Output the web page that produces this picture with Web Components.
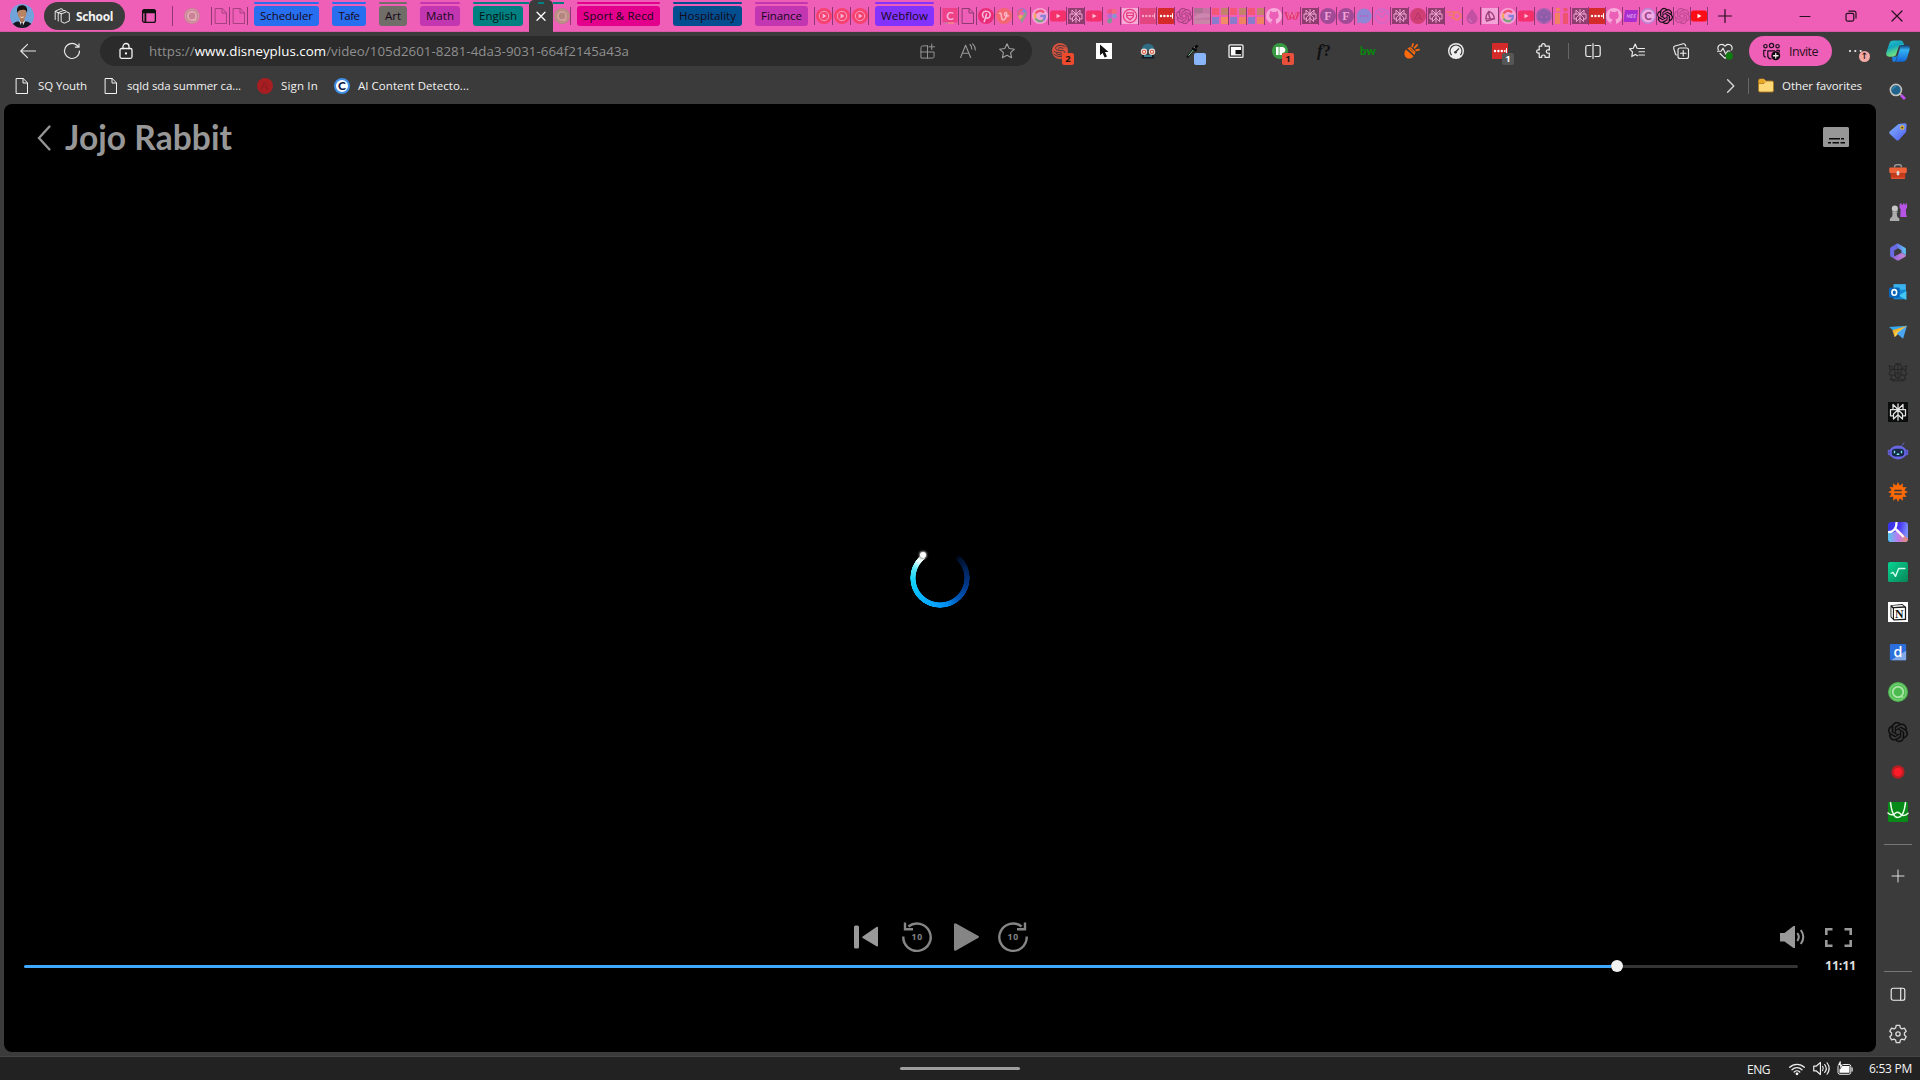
<!DOCTYPE html>
<html lang="en">
<head>
<meta charset="utf-8">
<title>Jojo Rabbit</title>
<style>
html,body{margin:0;padding:0;width:1920px;height:1080px;overflow:hidden;background:#3b3b3b}
body{font-family:"Open Sans","Noto Sans",sans-serif;font-size:11.5px;color:#f2f2f2}
</style>
</head>
<body>
<browser-window></browser-window>
<script>
const line=(d,c='#f0f0f0',w=1)=>`<g fill="none" stroke="${c}" stroke-width="${w}" stroke-linecap="round" stroke-linejoin="round">${d}</g>`;
const P=(d,x='')=>`<path d="${d}" ${x}/>`;
const spin=(d,n)=>Array.from({length:n},(_,i)=>`<g transform="rotate(${i*360/n} 8 8)">${d}</g>`).join('');
const letter=(t,c,s=11,x=8,y=12,f='Open Sans',w=700,extra='')=>`<text x="${x}" y="${y}" text-anchor="middle" font-family="${f}" font-weight="${w}" font-size="${s}" fill="${c}" ${extra}>${t}</text>`;
const knot=c=>`<path transform="scale(.6667)" fill="${c}" stroke="${c}" stroke-width=".25" d="M22.2819 9.8211a5.9847 5.9847 0 0 0-.5157-4.9108 6.0462 6.0462 0 0 0-6.5098-2.9A6.0651 6.0651 0 0 0 4.9807 4.1818a5.9847 5.9847 0 0 0-3.9977 2.9 6.0462 6.0462 0 0 0 .7427 7.0966 5.98 5.98 0 0 0 .511 4.9107 6.051 6.051 0 0 0 6.5146 2.9001A5.9847 5.9847 0 0 0 13.2599 24a6.0557 6.0557 0 0 0 5.7718-4.2058 5.9894 5.9894 0 0 0 3.9977-2.9001 6.0557 6.0557 0 0 0-.7475-7.0729zm-9.022 12.6081a4.4755 4.4755 0 0 1-2.8764-1.0408l.1419-.0804 4.7783-2.7582a.7948.7948 0 0 0 .3927-.6813v-6.7369l2.02 1.1686a.071.071 0 0 1 .038.052v5.5826a4.504 4.504 0 0 1-4.4945 4.4944zm-9.6607-4.1254a4.4708 4.4708 0 0 1-.5346-3.0137l.142.0852 4.783 2.7582a.7712.7712 0 0 0 .7806 0l5.8428-3.3685v2.3324a.0804.0804 0 0 1-.0332.0615L9.74 19.9502a4.4992 4.4992 0 0 1-6.1408-1.6464zM2.3408 7.8956a4.485 4.485 0 0 1 2.3655-1.9728V11.6a.7664.7664 0 0 0 .3879.6765l5.8144 3.3543-2.0201 1.1685a.0757.0757 0 0 1-.071 0l-4.8303-2.7865A4.504 4.504 0 0 1 2.3408 7.872zm16.5963 3.8558L13.1038 8.364 15.1192 7.2a.0757.0757 0 0 1 .071 0l4.8303 2.7913a4.4944 4.4944 0 0 1-.6765 8.1042v-5.6772a.79.79 0 0 0-.407-.667zm2.0107-3.0231l-.142-.0852-4.7735-2.7818a.7759.7759 0 0 0-.7854 0L9.409 9.2297V6.8974a.0662.0662 0 0 1 .0284-.0615l4.8303-2.7866a4.4992 4.4992 0 0 1 6.6802 4.66zM8.3065 12.863l-2.02-1.1638a.0804.0804 0 0 1-.038-.0567V6.0742a4.4992 4.4992 0 0 1 7.3757-3.4537l-.142.0805L8.704 5.459a.7948.7948 0 0 0-.3927.6813zm1.0976-2.3654l2.602-1.4998 2.6069 1.4998v2.9994l-2.5974 1.4997-2.6067-1.4997Z"/>`;
const docIcon=c=>line(P('M2.5.5h6.7l4.3 4.3v10.700h-11zM9 .7V5h4.300'),c,1);
const perp=(bg,c)=>`<rect width="16" height="16" rx=".5" fill="${bg}"/>`+line(P('M8 1.500v13M8 6 4 2v4M8 6l4-4v4M8 6.200 4.400 9.600v4L8 10.200M8 6.200l3.600 3.400v4L8 10.200M4.400 11H2V6h12v5h-2.400'),c,1);
const targ=(a,b)=>`<circle cx="8" cy="8" r="8" fill="${a}"/><circle cx="8" cy="8" r="4.200" fill="none" stroke="${b}" stroke-width="1.500"/><circle cx="8" cy="8" r="6.500" fill="none" stroke="${b}" stroke-width=".5"/>`+P('M8.500 11.200h3.700v1.200H8z',`fill="${b}"`);
const yt=(a,b)=>`<rect y="2.500" width="16" height="11" rx="2.500" fill="${a}"/>`+P('M6.500 5.700v4.600l4-2.300z',`fill="${b}"`);
const dots=(a,b)=>`<rect width="16" height="16" rx=".8" fill="${a}"/><g fill="${b}"><circle cx="3" cy="8" r="1.200"/><circle cx="6.400" cy="8" r="1.200"/><circle cx="9.800" cy="8" r="1.200"/><circle cx="12.800" cy="8" r="1"/><rect x="14" y="5.200" width="1" height="5.500"/></g>`;
const gee=`<g fill="none" stroke-width="2.300"><circle cx="8" cy="8" r="8" fill="#f6a6d8" stroke="none"/><path d="M12 4.500A5.200 5.200 0 0 0 3.500 5.500" stroke="#f25272"/><path d="M3.500 5.500a5.200 5.200 0 0 0 0 5" stroke="#f4a65c"/><path d="M3.500 10.500a5.200 5.200 0 0 0 7.800 1.600" stroke="#7aa37c"/><path d="M11.300 12.100A5.200 5.200 0 0 0 13 8H8.300" stroke="#8a80d8"/></g>`;
const tiles=(a,b,c,d)=>`<path d="M0 0h7v7H0z" fill="${a}"/><path d="M9 0h7v7H9z" fill="${b}"/><path d="M0 9h7v7H0z" fill="${c}"/><path d="M9 9h7v7H9z" fill="${d}"/>`;
const git=`<circle cx="8" cy="8" r="8" fill="#f7a9d9"/>`+P('M6 16v-2.600c-2 .5-2.600-1-3.200-1.500M10 16v-3c0-.8-.3-1.300-.6-1.600 4-.6 3.900-5 2.500-6.200.2-.7.2-1.400-.1-2.100-.8 0-1.600.5-2.200 1a7 7 0 0 0-3.200 0c-.7-.5-1.400-1-2.200-1-.3.7-.3 1.400-.1 2.100-1.400 1.200-1.500 5.600 2.500 6.200-.4.3-.6.900-.6 1.600v3z','fill="#ec5fb6"');
const play3=`<circle cx="8" cy="8" r="8" fill="#f5426f"/><circle cx="8" cy="8" r="4.700" fill="none" stroke="#f9a6cc" stroke-width=".9"/>`+P('M6.600 5.600v4.800L10.500 8z','fill="#f9b0d2"');
const serifF=`<circle cx="8" cy="8" r="8" fill="#a14a98"/>`+letter('F','#f2a3d8',12,8,12.200,'Liberation Serif',700);
const fullStar='M8 .8l2.200 4.700 5.200.7-3.800 3.500 1 5.100L8 12.300l-4.600 2.500 1-5.100L.6 6.200l5.200-.7z';
const skip10=(flip)=>`<g fill="none" stroke="#858585" stroke-width="2.400" ${flip?'transform="matrix(-1 0 0 1 30 0)"':''}><path d="M1.300 14.500A13.700 13.700 0 1 0 6.400 4.500"/><path d="M3 .5v6.700h8" /></g>`+letter('10','#858585',8.600,15.200,18.100,'Open Sans',700,'letter-spacing=".9"');

const ICONS={
avatar:`<defs><clipPath id="c"><circle cx="8" cy="8" r="8"/></clipPath></defs><g clip-path="url(#c)"><path fill="#6fa3da" d="M0 0h16v16H0z"/><path fill="#15171f" d="M1 16c.5-4 3-4.500 7-4.500S14.500 12 15.300 16z"/><path fill="#e8ecf2" d="M6 11l2 4.800L10.200 11z"/><path fill="#23242e" d="M7.500 12.300h1L9 16H7z"/><path fill="#a9765a" d="M6.600 9h3v2.500L8 12.500l-1.400-1z"/><ellipse cx="8" cy="6.300" rx="2.900" ry="3.900" fill="#b98263"/><path fill="#17110f" d="M4.800 6C4.200 2.700 5.500.9 8 .9s4 1.500 3.300 5.100C10.900 4.300 10.300 3.700 9 3.800 7 4 5.500 3.800 4.800 6z"/><path d="M6.900 8.600q1.100.8 2.200 0" stroke="#f3ddd0" stroke-width=".6" fill="none"/></g>`,
school:line(P('M7.500 5.800 12.500 3.800l2.800 1.200v8L10.300 15.200 7.500 13.800zM4.200 13V4.700L10 2.300l1.800.7M1.200 11.500V3.200L7 .7l1.800.7M7.500 5.800l-3-1M4.200 4.700l-2.800-1.200'),'#f2f2f2',.95),
tabact:`<rect x="1.600" y="1.600" width="12.800" height="12.800" rx="2" fill="none" stroke="#111" stroke-width="1.300"/><path d="M1 5.200V3.500a2 2 0 0 1 2-2h10a2 2 0 0 1 2 2v1.700zM3.500 5h1.800v9.500H3.500z" fill="#111"/>`,
target:targ('#c98396','#e8b0b8'), target2:targ('#b2877f','#d8a4a2'), targetG:targ('#4cba4f','#a7e3a2'),
doc:docIcon('#f2f2f2'), docP:docIcon('#a4417e'), docD:docIcon('#8d3a70'),
close:line(P('M4 4.300l8 8M12 4.300l-8 8'),'#fff',1.300),
wclose:line(P('M3 3l10 10M13 3L3 13'),'#251020',1.200), wmin:line(P('M3 8.500h10'),'#251020',1.200),
wmax:line('<rect x="3" y="5.300" width="7.800" height="7.800" rx="1.500"/>'+P('M5.800 3.100H11a2 2 0 0 1 2 2v5'),'#251020',1.200),
newtab:line(P('M8 1.500v13M1.500 8h13'),'#251020',1.200),
play3, cee:`<path fill="#ee4187" d="M.5 0h15v14.500H.5z"/><path d="M2 15h4" stroke="#b986a5"/><path d="M6 15h6" stroke="#f2a36d"/>`+letter('C','#f9b3d8',11.500,8,12,'Lato',700),
pin:`<circle cx="8" cy="8" r="8" fill="#e92d78"/>`+P('M5.300 9.200C3.200 6.200 5 3.300 8.200 3.300c3 0 4.400 2 3.900 4.300-.5 2.500-3 3.300-4.200 1.900M8.500 6L6.300 13.500','fill="none" stroke="#f8b7d9" stroke-width="1.600" stroke-linecap="round"'),
vk:`<circle cx="8" cy="8" r="8" fill="#f56673"/>`+line(P('M3.300 5.300c1.500-.8 1.900.5 2 2.500.1 2.200 1 4.700 2.300 4.200 1.700-.7 3.300-4 3.200-6.200-.1-2-2.300-1.800-2.300.1 0 2 2 2.700 4 1.900'),'#fbb6c6',1.500),
maps:P('M8 .3C4.500.3 3 3 3 5.300 3 9 7 11 8 15.700 9 11 13 9 13 5.300 13 3 11.500.3 8 .3z','fill="#8b79cc"')+P('M3.700 8.300L9.900.8C5 .2 2 3.600 3.700 8.300z','fill="#f06083"')+P('M5 10.200l6.500-7.500c2.600 3-.2 6-3.500 12-.5-2-1.500-3-3-4.500z','fill="#96a084"')+P('M4 8.800l2.500-3 2.800 2-3.400 4z','fill="#f1a064"')+P('M10 1l2.500 2L9.700 6 8 4z','fill="#8b85d6"')+`<circle cx="8" cy="5.500" r="1.900" fill="#ee62b7"/>`,
gee, yt:yt('#f42f6c','#fbc0d8'), ytS:yt('#fb0d16','#fff'),
perp:perp('#8f3c70','#eda4d2'), perpB:perp('#0b0c0c','#e2e2e2'),
figma:`<path d="M8 1H5.500a2.400 2.400 0 0 0 0 4.800H8z" fill="#f15286"/><path d="M8 1h2.500a2.400 2.400 0 0 1 0 4.800H8z" fill="#f46a7c"/><path d="M8 5.800H5.500a2.400 2.400 0 0 0 0 4.800H8z" fill="#b866d1"/><circle cx="10.500" cy="8.200" r="2.400" fill="#8b93d3"/><path d="M8 10.600H5.500A2.400 2.400 0 1 0 8 13z" fill="#799a93"/>`,
shield:`<path fill="#f7a9d8" d="M0 0h16v16H0z"/><circle cx="8" cy="8" r="6.600" fill="none" stroke="#e83a7a" stroke-width="1.200"/>`+line(P('M4.700 4.800h6.600v4L8 11.800 4.700 8.800zM5 7.500h6'),'#e83a7a',1.200),
dots:dots('#e2457f','#f6a7cc'), dotsS:dots('#d42b2a','#fff'), knotF:knot('#a4427f'), knotP:knot('#bb4991'), knotB:knot('#0d0d0d'),
blur:`<path fill="#c476a5" d="M0 0h16v16H0z"/><path fill="#ad7294" d="M0 0h9v5H0z"/><path fill="#cd87ae" d="M3 7l6-2 7 1v3l-8 1-8 1V9z"/><path fill="#c985a8" d="M0 12h16v4H0z"/>`,
tiles1:tiles('#f45678','#c5826a','#8b7bcd','#f38c66'), tiles2:tiles('#f45678','#c5826a','#8b7bcd','#f08361'),
git, dubya:P('M0 4h4l1.500 5L7 4h2l1.500 5L12 4h4l-3.500 8H9.500L8 9l-1.500 3h-3z','fill="#e23a76"')+P('M3.200 4.500l2 7M12.800 4.500l-2 7M6 4l2 5 2-5','stroke="#f48db8" stroke-width=".7" fill="none"'),
serifF, chat:P('M8 .5a7.500 7.500 0 1 1-3.700 14L.8 15.300l.9-3.600A7.500 7.500 0 0 1 8 .5z','fill="#8f86d5"')+`<g fill="#b45fc0"><circle cx="4.700" cy="8" r="1"/><circle cx="8" cy="8" r="1"/><circle cx="11.300" cy="8" r="1"/></g>`,
ring:line('<circle cx="8" cy="8" r="7.200"/>'+P('M1.500 4.500C5 5 6 7.500 8 9.500c2-2 3-4.500 6.500-5M5.500 2.500l2.500 2 2.500-2'),'#c56dcb',1.300),
redc:`<circle cx="8" cy="8" r="8" fill="#cf3f73"/>`+line(P('M4.500 11.500L8 4.500l3.500 7M7 11.500c0-3 4-2 4.500 0'),'#b43467',1),
comet:line(P('M.8 4h8M3 7h5M5.500 10H8'),'#f3776c',1.600)+`<circle cx="11" cy="8" r="3.700" fill="none" stroke="#f3776c" stroke-width="2"/>`,
drop:P('M8 .3C9 3.500 13.500 6.500 13.500 10.500a5.500 5.500 0 0 1-11 0C2.500 6.500 7 3.500 8 .3z','fill="#c251a3"')+P('M5 10.500a3 3 0 0 0 3 3','fill="none" stroke="#d978bb"'),
sail:`<path fill="#f4a3d8" d="M0 0h16v16H0z"/>`+line(P('M7 3.300c3 1 5 4 5.500 7.500L4.500 13c-1.500-4 0-7 2.500-9.700zM3.500 10.700l9 .1M7 3.300c-.5 3 0 5.500 1.500 7.500'),'#9e3f78',1.300),
hex:`<circle cx="8" cy="8" r="8" fill="#a761ae"/>`+line(P('M8 2l5.200 3v6L8 14l-5.200-3V5zM2.800 5L8 8l5.200-3M8 8v6M5.400 3.500l5.200 9M10.600 3.500l-5.200 9M2.800 11L8 2l5.200 9z'),'#7f5aa8',.9),
ii:`<g fill="#f28065"><path d="M2 0h4v3.500H2zM1 5h5v11H1z"/></g><path fill="#ed526e" d="M9.500 0h4v3.500h-4zM9 5h5v11H9z"/>`,
nhs:P('M2 2h13l-1.500 12H.5z','fill="#a92ed0"')+P('M4 9.500l.5-3 1.500 3 .5-3M10 6.500H8l-.5 3h2M7.800 8h1.700M13 6.500h-1.800l-.4 3h1.800M11 8h1.500','fill="none" stroke="#d99af0" stroke-width=".8"'),
ceeR:`<circle cx="8" cy="8" r="7.200" fill="#f4a9e0" stroke="#b987d8" stroke-width="1.400"/>`+letter('C','#99458f',11.500,8,12,'Lato',900),
back:line(P('M15.500 8H.8M7.500 1.300L.8 8l6.700 6.700'),'#e8e8e8',1.100),
refresh:line(P('M15.500 8A7.500 7.500 0 1 1 12.900 2.300l1.800 1.600M15 .8v3.400h-3.600'),'#e8e8e8',1.200),
lock:line('<rect x="2" y="5.500" width="12" height="9.800" rx="1.500"/>'+P('M5 5.500V3.500a3 3 0 0 1 6 0v2'),'#f4f4f4',1.300)+'<circle cx="8" cy="10.400" r="1.100" fill="#fff"/>',
apps:line(P('M8 2H3a2 2 0 0 0-2 2v11h12.500a1.500 1.500 0 0 0 1.500-1.500V8.500H1M8 2v13M12.500 0v6M9.500 3h6'),'#9a9a9a',1),
read:line(P('M.6 14.500L5.600 2.300l5 12.200M2.400 10.300h6.500M10 1.500c1.300 1.300 1.800 2.700 1.800 4.500M12.700.8C14.600 2.700 15.300 4.700 15.300 7'),'#9a9a9a',1.100),
star:line(P(fullStar),'#a2a2a2',1.100),
sred:`<circle cx="8" cy="8" r="8" fill="#d9513e"/>`+line(P('M13.300 3.800C11 2 5.500 1.800 4 4c-1.300 2.300 1 3.300 4 3.400 3.500.2 5.300.8 4.800 2.600-.7 2.400-5 2.500-8.300.8M11 5.300c-2-.8-4-.8-4.500-.2M2 8.500c2 1.500 5 .8 7.500 1.500M2 11c2.500 3 7 3 9 2.300'),'#3b3b3b',1),
cursor:`<path fill="#fff" d="M0 0h16v16H0z"/><path d="M4 1.500v10.700l2.600-2.300 2 4.600 2.400-1-2-4.500h3.600z" fill="#111"/>`,
face:`<path d="M1.500 7C1.700 3 4.500.7 8 .7S14.300 3 14.500 7z" fill="#2f6d85"/><path d="M2.500 12h11l1 3.500h-13z" fill="#161d22"/><path d="M4 12h8v2H4z" fill="#3d7f95"/><circle cx="4" cy="8.800" r="2.700" fill="#e25947" stroke="#e9dcd5" stroke-width="1.100"/><circle cx="12" cy="8.800" r="2.700" fill="#e25947" stroke="#e9dcd5" stroke-width="1.100"/><circle cx="4" cy="8.800" r="1" fill="#fff"/><circle cx="12" cy="8.800" r="1" fill="#fff"/>`,
dropper:`<path d="M3 14.500L9.500 6.500" stroke="#111" stroke-width="2.200"/><path d="M4.500 12.700L9.300 7" stroke="#7fd69d" stroke-width="1"/><path d="M8.500 4.500l4 3.500M10.500 6l3-3.800" stroke="#090909" stroke-width="2.600"/><path d="M10 4.300l.9 1" stroke="#ddd"/>`,
pip:'<rect x="1" y="1.800" width="14" height="12.600" rx="1" fill="none" stroke="#eee" stroke-width="1.300"/><path d="M3 4h10v8.400H3z" fill="#fff"/><path d="M7.500 7h5.500v4.200H7.500z" fill="#111"/>',
pushb:`<circle cx="8" cy="8" r="8" fill="#389b42"/><path d="M4 4h2.600v8H4zM7.500 4H10c4.500 0 4.500 6 0 6v2H7.500z" fill="#fff"/>`,
fq:letter('<tspan font-style="italic">f</tspan>?','#111',17,8,12.800,'Liberation Serif',700),
bw:letter('bw','#08870d',11.500,8,12,'Lato',900),
spray:`<path d="M2 6.500l7.500 6.700c-2 3-5.800 3-7.700 1C-.3 12 .3 8.500 2 6.500zM3.300 5.200L6.500 4l5 5-1 3z" fill="#ff6b0b"/>`+line(P('M8.200 3.500L9 .8M10.500 4.800l2.700-2.900M12 7.300l3-.6'),'#ff6b0b',1.700)+line(P('M2.800 6.200l6.800 6M6.500 6l2.500 2.500'),'#3b3b3b',.8),
gauge:`<circle cx="8" cy="8" r="8" fill="#eee"/><path d="M3.700 12.200a6 6 0 1 1 8.600 0" fill="none" stroke="#3a3a3a" stroke-width="1.200"/><path d="M7.500 9L11 5.500" stroke="#333" stroke-width="1.300"/><circle cx="7.500" cy="9.300" r="1.300" fill="#333"/>`,
puzzle:line(P('M5.800 3.200C5.200 1.500 6.200.7 7.400.7s2.300.9 1.600 2.500h4.300v3.900c-1.600-.7-3 .2-3 1.400s1.400 2.200 3 1.500v4.300H9c.5-1.500-.3-2.300-1.600-2.300s-2.100.8-1.600 2.300H3.200v-4.500C1.500 10.500.7 9.600.7 8.400s1-2 2.500-1.400V3.200z'),'#ececec',1.200),
split:line(P('M6 2.500H2.500a1.700 1.700 0 0 0-1.700 1.700v7.600a1.700 1.700 0 0 0 1.700 1.700H6M10 2.500h3.500a1.700 1.700 0 0 1 1.700 1.700v7.600a1.700 1.700 0 0 1-1.700 1.700H10M8 .5v15'),'#eee',1.200),
favs:line(P('M10 5.500L8 5.300 6.200 1 4.300 5.300l-3.800.6 3 3-.7 4.700 3.500-2.200 2.400 1.300M10.500 5.500h5M10 8.700h5.500M10 12h5.500'),'#eee',1.150),
coll:line('<rect x="5" y="5" width="10.500" height="10.500" rx="2"/>'+P('M10.200 7.500v5.500M7.500 10.200H13M12.700 3l-.4-1A1.700 1.700 0 0 0 10.200.8L2 3A1.900 1.900 0 0 0 .7 5.300L2.500 11c.2.600.5.900 1 1'),'#eee',1.150),
heart:line(P('M1.300 7C-.5 2 5.500-.5 8 3.200 10.500-.5 16.500 2 14.700 7M3 10.500l5 4.800 2-2M.5 8.200H4l2-3 2.800 6L10.500 8H13'),'#eee',1.150)+'<circle cx="12.300" cy="13" r="3.700" fill="#107c10"/>',
people:line('<circle cx="2.300" cy="3" r="1.600"/><circle cx="8" cy="2.300" r="2"/><circle cx="13.700" cy="3" r="1.600"/>'+P('M4.500 13V7.500h6.500M2.300 7H.7v4c0 1 .5 2 1.500 2.300M4.500 11c0 2.200 1 3.800 3 4M13 7h2.300v1.500'),'#211020',1.150)+'<circle cx="12" cy="12" r="4.200" fill="#0d080b"/>'+line(P('M12 9.800v4.400M9.800 12h4.400'),'#f4e8f0',1.200),
more:'<g fill="#eee"><circle cx="2" cy="8" r="1.100"/><circle cx="7.300" cy="8" r="1.100"/><circle cx="12.700" cy="8" r="1.100"/></g>',
copilot:`<defs><linearGradient id="a" x2=".4" y2="1"><stop stop-color="#2ac4c9"/><stop offset=".45" stop-color="#12a4bf"/><stop offset=".75" stop-color="#51d292"/><stop offset="1" stop-color="#78df77"/></linearGradient><linearGradient id="b" x2="0" y2="1"><stop stop-color="#12396e"/><stop offset=".3" stop-color="#34b2f5"/><stop offset="1" stop-color="#1266d8"/></linearGradient></defs><path d="M14 5h6.500c3 0 3.800 2.500 3 5l-2.500 8c-.7 2.500-2 3.700-4.500 3.700H7.500c2.500 0 3-1.500 3.700-4L14 8z" fill="url(#b)"/><path d="M7.500.5h7.200c2 0 2.600 1.600 3.300 4.500h-2.500c-2 0-2.700 1.200-3.300 3.200L10.300 14c-.6 1.800-1.500 2.700-3.500 2.700H3.300C.5 16.700-.3 14.500.5 12L3.300 3.500C4 1.500 5.200.5 7.500.5z" fill="url(#a)"/><path d="M6 16.700h3c1.500 0 2.200-1 3-3l-2 6c-.5 1.500-1.500 2-2.500 2-1.500 0-1-3-1.500-5z" fill="#1c82e2"/>`,
signin:'<circle cx="8" cy="8" r="8" fill="#a61e22"/>'+line(P('M4 11.500l3.500-7 4 7M4.500 9c2-1.500 4-1 5.500 2.500'),'#8e1b1f',1),
ai:`<circle cx="8" cy="8" r="7" fill="#fff" stroke="#3f8fe6" stroke-width="2"/>`+letter('C','#0e1749',12,8,12.300,'Lato',900),
chev:line(P('M5 2.500L10.500 8 5 13.500'),'#d8d8d8',1.200),
folder:'<path d="M.5 2.500A1.500 1.500 0 0 1 2 1h4l2 2h6A1.500 1.500 0 0 1 15.500 4.500v8A1.500 1.500 0 0 1 14 14H2A1.500 1.500 0 0 1 .5 12.500z" fill="#ffd977" stroke="#a9751d" stroke-width=".9"/><path d="M1 2.500A1 1 0 0 1 2 1.500h3.800l1.500 2L5.500 5.200H1z" fill="#e9a924"/><path d="M1 5.500h5L7.500 3.800" stroke="#a9751d" stroke-width=".8" fill="none"/>',
search:`<path d="M10.500 10.500l1.200 1.200" stroke="#bbb" stroke-width="1.500"/><path d="M11.500 11.500L15 15" stroke="#c04cf0" stroke-width="2.700"/><circle cx="6.500" cy="6.500" r="5.200" fill="#20638d" stroke="#c4c0bb" stroke-width="1.500"/><path d="M3.500 6a3 3 0 0 1 3-2.500" stroke="#3a91b7" fill="none"/>`,
tag:`<defs><linearGradient id="a" x2="1" y2="1"><stop stop-color="#82b5ff"/><stop offset="1" stop-color="#4f5bf0"/></linearGradient></defs><path d="M8.500.8l5.500-.5c1.200 0 1.700.7 1.700 1.700l-.5 6-6.500 7c-.8.7-1.600.6-2.300 0L.8 9.700C0 9 0 8 .8 7.300z" fill="url(#a)"/><circle cx="11.800" cy="4" r="1.500" fill="#444" stroke="#f0bd31" stroke-width="1"/>`,
box:`<path d="M5 4V3a1.500 1.500 0 0 1 1.500-1.500h3A1.500 1.500 0 0 1 11 3v1" fill="none" stroke="#999" stroke-width="1.300"/><rect x=".2" y="4" width="15.600" height="5" rx="1" fill="#f06237"/><path d="M1.500 9h13v4a1 1 0 0 1-1 1h-11a1 1 0 0 1-1-1z" fill="#c53b1c"/><path d="M2 13h12v1H2z" fill="#e65a36"/><rect x="6.800" y="7" width="2.400" height="4" rx="1" fill="#ddd"/>`,
games:`<path d="M9.500.5h1.700v1.300h1V.5h1.700v1.300h.8V.5H16v4l-1 1 .3 5 .7 2h-6l.3-7-1-1z" fill="#b655e5"/><circle cx="5.200" cy="5" r="2.700" fill="#c7c7c7"/><path d="M2.700 7.500h5v1.200H6.800l.5 3.300 1.900 2V16H.8v-2l2-2 .5-3.300h-.6z" fill="#acacac"/>`,
m365:`<defs><linearGradient id="a"><stop stop-color="#6d68e8"/><stop offset="1" stop-color="#5cc8f2"/></linearGradient><linearGradient id="b"><stop stop-color="#8a58d8"/><stop offset="1" stop-color="#c98bd6"/></linearGradient></defs><path d="M7.500.3L14 4c.8.500 1 .8 1 1.700v5L11 8.500v-2L7.300 4.300C5.500 3 5.600 1.300 7.500.3z" fill="url(#a)"/><path d="M7.500.3L2 3.600c-.8.500-1 .9-1 1.700v5.400c0 2 2 2.500 3.600 1.500V6.700L8 4.700C5.800 3.500 5.600 1.400 7.500.3z" fill="#6a6be4"/><path d="M1 10.700c.3 1.800 2 2.400 3.600 1.400L11 8.600l4 2.200c0 .8-.3 1.200-1 1.600l-5 2.900c-.8.500-1.300.500-2 0l-5-2.900c-.6-.4-1-.8-1-1.700z" fill="url(#b)"/>`,
outlook:`<path fill="#38b3ed" d="M4 1h11v11H4z"/><path fill="#138ad5" d="M4 6l11 0v8.500H4z"/><path fill="#45c7f5" d="M15.500 7v8l-7-4z"/><rect y="4" width="9.500" height="9" rx="1" fill="#0764b8"/><ellipse cx="4.700" cy="8.400" rx="2.100" ry="2.500" fill="none" stroke="#fff" stroke-width="1.400"/>`,
plane:`<path fill="#37a9ed" d="M0 3.500L16 2.500 5 7.500z"/><path fill="#f1b12c" d="M3 6.500l13-4L5 12.500z"/><path fill="#f6cf53" d="M5.500 8.500L16 2.500 5 12.500z"/><path fill="#4aa6f5" d="M16 2.500L7 9l5.500 5z"/>`,
crest:`<g fill="none" stroke="#252525" stroke-width=".9" opacity=".85"><path d="M5 4c1-3 5-3 6 0l-1 8-2 2-2-2zM5 6h6M5 9h6M8 2v12M4 4L1 3l1 4-1 3 2 1-1 3h4M12 4l3-1-1 4 1 3-2 1 1 3h-4M2 7l3-2M14 7l-3-2M3 10l3 1M13 10l-3 1M6 1l2 1 2-1M3 15h10"/></g>`,
bot:`<g transform="translate(0 -1)"><ellipse cx="8" cy="9.300" rx="7" ry="5.600" fill="#6866e4"/><path d="M.2 7.500l2 .4v3.600L.2 11zM15.800 7.500l-2 .4v3.600l2-.5zM11 4l2-2.500" fill="#5351c4" stroke="#6866e4" stroke-width=".7"/><rect x="3" y="6.400" width="10" height="6.200" rx="3" fill="#152942"/><path d="M5.200 8v2M10.800 8v2M7 10.500q1 .7 2 0" stroke="#80e7ef" stroke-width="1.100" fill="none"/></g>`,
burst:`<g fill="#fb6a08">${spin(P('M6.200 4L8 0l1.800 4z'),12)}<circle cx="8" cy="8" r="5.500"/></g><path d="M5 6.800h6M5 9.500h6" stroke="#3b3b3b" stroke-width="1.200"/>`,
rain:`<defs><linearGradient id="a" x2="1" y2=".2"><stop stop-color="#3733e2"/><stop offset=".6" stop-color="#4a38f5"/><stop offset="1" stop-color="#7a8bfa"/></linearGradient><linearGradient id="b"><stop stop-color="#52c8ee"/><stop offset=".5" stop-color="#ba7af1"/><stop offset="1" stop-color="#f28a62"/></linearGradient></defs><rect width="16" height="16" rx="2.500" fill="url(#a)"/><path d="M0 8.500c5 0 7-1 8-3l8 8v.5a2.500 2.500 0 0 1-2.500 2h-11A2.500 2.500 0 0 1 0 13.500z" fill="url(#b)"/><path d="M0 8c4 .2 7-2.500 6.800-8M6 5.500l6.500 6.500" fill="none" stroke="#fff" stroke-width="1.700"/>`,
root:`<defs><linearGradient id="a" x2="1" y2="1"><stop stop-color="#07d692"/><stop offset="1" stop-color="#078457"/></linearGradient></defs><rect width="16" height="16" rx="1.500" fill="url(#a)"/>`+line(P('M2.500 9l1.500-.7 2 3.200L8.500 5.200h5'),'#d7fff1',1.100),
notion:`<path fill="#fff" d="M0 0h16v16H0z"/><path d="M2 2.500L11.500 1.500 14.500 4v10.300l-10 .5L2 12z" fill="#1a1a1a"/><path d="M4.800 5l8.700-.5v8.900l-8.700.4z" fill="#fff"/><path d="M3 2.900l8.200-.6 1.700 1.100-8.400.5zM2.700 4.200l1.200 1V13L2.700 11.500z" fill="#fff"/>`+letter('N','#111',9.500,9.100,12.400,'Liberation Serif',700),
dee:`<rect x="1.500" y="1.500" width="13" height="13" rx="1" fill="#2c6edb"/><path d="M14.500 7v7.500h-12z" fill="#82a9e7"/>`+letter('d','#fff',11.500,8,11.900,'Open Sans',600),
rec:`<circle cx="8" cy="8" r="5.300" fill="#b91f22"/><circle cx="8" cy="8" r="3.500" fill="#fb1b29"/>`,
desmos:`<rect width="16" height="16" rx="1" fill="#078a18"/>`+line(P('M2 .5C3 9 5.500 12.500 8 12.300S13 9 14 .5M0 8.800c2 1.900 4 1.700 5.800.2s3.500-.5 4.200.6 3.500 2.200 6-.6'),'#eaffea',1.200),
plus:line(P('M8 2v12M2 8h12'),'#ddd',1), panel:line('<rect x="1.200" y="2.200" width="13.600" height="12" rx="2"/>'+P('M10.700 2.200v12'),'#eee',1.150),
gear:line(P('M6.400.4h3.200l.5 2.200 1.500.9 2.100-.7 1.600 2.800-1.600 1.500v1.800l1.600 1.500-1.600 2.800-2.100-.7-1.500.9-.5 2.200H6.400l-.5-2.200-1.500-.9-2.100.7-1.600-2.800 1.600-1.500V7.100L.7 5.600l1.600-2.800 2.100.7 1.500-.9z')+'<circle cx="8" cy="8" r="1.900"/>','#ddd',1.150),
vback:'<path d="M12.500 1.500L2 13l10.500 11.500" fill="none" stroke="#979797" stroke-width="2.300" stroke-linecap="round"/>',
subs:'<rect width="26" height="20" rx="1.500" fill="#979797"/><path d="M6 11.800h11M18 11.800h3M5 15.800h3M9.500 15.800H16M17.500 15.800h4.500" stroke="#090909" stroke-width="1.600"/>',
prev:'<rect x="0" y=".5" width="5" height="23" rx="1.500" fill="#999"/><path d="M8.700 11.400L22.500 2q1.500-.8 1.500.8v17.800q0 1.500-1.500.7L8.700 12.900q-1.200-.8 0-1.500z" fill="#999"/>',
rew:skip10(false), fwd:skip10(true),
vplay:'<path d="M0 1.700Q0-.6 2 .5l22 12.200q2 1.100 0 2.200L2 27.500Q0 28.500 0 26.300z" fill="#858585"/>',
vol:'<path d="M0 7h4.500L13.500 0H15v22h-1.500L4.500 15.500H0z" fill="#999"/><path d="M17.300 7q3 4 0 8M20.800 4q5 7 0 14" fill="none" stroke="#999" stroke-width="2"/>',
full:'<path d="M7.500 1.300H1.300V7M19.500 1.300h6.200V7M1.300 12v5.700h6.200M25.700 12v5.700h-6.200" fill="none" stroke="#999" stroke-width="2.600"/>',
wifi:line(P('M.7 6.300a10.400 10.400 0 0 1 14.600 0M3 8.700a7 7 0 0 1 10 0M5.200 11a4 4 0 0 1 5.600 0'),'#eee',1.300)+'<circle cx="8" cy="12.800" r="1.400" fill="#fff"/>',
snd:line(P('M.7 5.700h2.500L7 2.300v11.400l-3.800-3.400H.7zM9 6q1.500 2 0 4M11 4.300q3 3.700 0 7.400M13.200 2.600q4 5.400 0 10.800'),'#eee',1.100),
bat:'<rect x="1" y="3.500" width="12.800" height="9.800" rx="2" fill="none" stroke="#eee" stroke-width="1"/><path d="M4.500 5h8v6.800H2.500V8z" fill="#fff"/><path d="M14.500 6.500h1.200V10.500h-1.200z" fill="#eee"/><path d="M2.800 0L.6 4.500H3v3.700L6 3.500H4V0z" fill="#fff" stroke="#222" stroke-width=".5"/>'
};

const tpl=html=>{const t=document.createElement('template');t.innerHTML=html;return t};
const define=(name,html,after)=>{
  const t=tpl(html);
  customElements.define(name,class extends HTMLElement{
    connectedCallback(){
      if(this.shadowRoot)return;
      this.attachShadow({mode:'open'}).appendChild(t.content.cloneNode(true));
      if(after)after.call(this);
    }
  });
};

/* n: glyph, w/h: box, ml: gap before, vb: viewBox when it is not 16 x 16 */
define('ui-icon','<style>:host{display:block;flex:none}svg{display:block;width:100%;height:100%;overflow:visible}</style>',function(){
  const w=this.getAttribute('w')||16,h=this.getAttribute('h')||w;
  this.style.width=w+'px';this.style.height=h+'px';
  if(this.hasAttribute('ml'))this.style.marginLeft=this.getAttribute('ml')+'px';
  const box=document.createElement('div');
  box.style.cssText='width:100%;height:100%';
  box.innerHTML=`<svg viewBox="0 0 ${this.getAttribute('vb')||'16 16'}">${ICONS[this.getAttribute('n')]}</svg>`;
  this.shadowRoot.append(box);
});

/* a label that spreads its letters over a given width */
define('fit-text','<style>:host{display:inline-block;flex:none;white-space:nowrap}</style><slot></slot>',function(){
  const w=+this.getAttribute('w');
  if(this.hasAttribute('ml'))this.style.marginLeft=this.getAttribute('ml')+'px';
  const nat=this.getBoundingClientRect().width,n=this.textContent.length;
  this.style.letterSpacing=((w-nat)/n).toFixed(3)+'px';
  this.style.width=w+'px';
});

define('tab-group',`<style>:host{display:flex;flex-direction:column;flex:none;height:32px;padding-top:2px;box-sizing:border-box;color:#160817}
.l{height:2px;border-radius:1px;background:var(--c)}.b{margin-top:2px;height:19px;border-radius:3px;background:var(--c);display:flex;align-items:center;justify-content:center;padding-bottom:1px}</style>
<div class="l"></div><div class="b"><slot></slot></div>`);

define('tab-cell',`<style>:host{display:flex;flex:none;width:18px;height:18px;box-sizing:border-box;border-right:1px solid #8e3a70;align-items:center;justify-content:center;margin-top:0}</style><slot></slot>`);

const cells=['cee','docD','pin','vk','maps','gee','yt','perp','yt','figma','shield','dots','dotsS','knotF','blur','tiles1','tiles2','tiles2','git','dubya','perp','serifF','serifF','chat','ring','perp','redc','perp','comet','drop','sail','gee','yt','hex','ii','perp'];
const cells2=['dotsS','git','nhs','ceeR','knotB','knotP','ytS'];
const cell=(n,w=18)=>`<tab-cell style="width:${w}px"><ui-icon n="${n}" w="16"></ui-icon></tab-cell>`;
const grp=(t,w,tw,c,ml)=>`<tab-group style="width:${w}px;margin-left:${ml}px;--c:${c}"><fit-text w="${tw}">${t}</fit-text></tab-group>`;

define('tab-strip',`<style>
:host{display:flex;height:32px;background:#ef5fb7;align-items:center;box-shadow:inset 0 -1px #d758a5}
.pill{display:flex;align-items:center;height:28px;width:81px;box-sizing:border-box;border-radius:14px;background:#3b3b3b;margin-left:10px;padding-left:10px;font-weight:700;font-size:12px}
.sep{width:1px;height:18px;background:#8e3a70;flex:none}.tall{height:20px}
.eng{display:flex;align-items:flex-start;width:92px;height:32px;margin-left:13px}
.engcol{display:flex;flex-direction:column;width:56px;padding-top:2px}.engcol i{height:2px;background:#008080;border-radius:1px 0 0 1px}
.engcol div{margin-top:2px;height:19px;padding-bottom:1px;width:50px;border-radius:3px;background:#008080;display:flex;align-items:center;justify-content:center;color:#051414}
.act{width:24px;height:32px;background:#3b3b3b;border-radius:5px 5px 0 0;display:flex;flex-direction:column;align-items:center}
.act i{width:6px;height:2px;background:#008080;margin-top:2px}.act ui-icon{margin-top:4px}
.after{width:12px;display:flex;flex-direction:column;padding-top:2px}.after i{height:2px;width:11px;background:#008080}.after ui-icon{margin:4px 0 0 1px}
</style>
<ui-icon n="avatar" w="24" ml="10"></ui-icon>
<div class="pill"><ui-icon n="school" w="16"></ui-icon><fit-text w="37" ml="6">School</fit-text></div>
<ui-icon n="tabact" w="16" ml="16"></ui-icon>
<div class="sep tall" style="margin-left:15px"></div>
<ui-icon n="target" w="16" ml="11"></ui-icon>
<div class="sep" style="margin-left:11px"></div>
${cell('docP')}${cell('docP')}
${grp('Scheduler',65,53,'#286ff0',6)}${grp('Tafe',34,21,'#286ff0',13)}${grp('Art',28,16,'#716d69',13)}${grp('Math',40,28,'#c237b1',13)}
<div class="eng"><div class="engcol"><i></i><div><fit-text w="38">English</fit-text></div></div><div class="act"><i></i><ui-icon n="close" w="16"></ui-icon></div><div class="after"><i></i><ui-icon n="target2" w="16"></ui-icon></div></div>
<div class="sep" style="margin-left:5px"></div>
${grp('Sport &amp; Recd',83,71,'#e3008c',6)}${grp('Hospitality',69,57,'#034e8e',13)}${grp('Finance',53,41,'#c237b1',13)}
<div class="sep" style="margin-left:6px"></div>
${cell('play3')}${cell('play3')}${cell('play3')}
${grp('Webflow',59,47,'#8433ff',6)}
<div class="sep" style="margin-left:6px"></div>
${cells.map(n=>cell(n)).join('')}${cells2.map(n=>cell(n,17)).join('')}
<ui-icon n="newtab" w="16" ml="9"></ui-icon>
<ui-icon n="wmin" w="16" ml="64"></ui-icon><ui-icon n="wmax" w="16" ml="30"></ui-icon><ui-icon n="wclose" w="16" ml="30"></ui-icon>`);

define('ext-button',`<style>:host{display:flex;flex:none;width:44px;height:30px;align-items:center;justify-content:center;position:relative}
::slotted(b){position:absolute;left:24px;top:17px;width:12px;height:12px;border-radius:2px;background:var(--b);color:var(--f,#151515);font:700 9.500px/12px "Open Sans",sans-serif;text-align:center}</style><slot></slot>`);
const ext=(n,b='')=>`<ext-button><ui-icon n="${n}" w="16"></ui-icon>${b}</ext-button>`;

define('tool-bar',`<style>
:host{display:flex;height:38px;box-sizing:border-box;padding-top:4px;align-items:flex-start}
.row{display:flex;align-items:center;height:30px}
.url{width:932px;border-radius:15px;background:#2b2b2b;margin-left:20px;font-size:13.300px;color:#8f8f8f}
.url span{color:#fff}
.inv{width:83px;border-radius:15px;background:#ef5fb7;color:#2a0f20;margin-left:2px;font-size:12.500px}
.up{position:relative}.up b{position:absolute;width:11px;height:11px;border-radius:50%;background:#f3a9a4;color:#3a1b18;font:700 9px/11px "DejaVu Sans",sans-serif;text-align:center}
.sep{width:1px;height:16px;background:#666;margin:0 2px 0 2px}
</style>
<div class="row"><ui-icon n="back" w="16" ml="20"></ui-icon><ui-icon n="refresh" w="16" ml="28"></ui-icon></div>
<div class="row url"><ui-icon n="lock" w="16" ml="18"></ui-icon><fit-text w="480" ml="15">https://<span>www.disneyplus.com</span>/video/105d2601-8281-4da3-9031-664f2145a43a</fit-text>
<ui-icon n="apps" w="15" ml="291"></ui-icon><ui-icon n="read" w="16" ml="25"></ui-icon><ui-icon n="star" w="16" ml="23"></ui-icon></div>
<div class="row" style="margin-left:6px">
${ext('sred','<b style="--b:#ee4b2e">2</b>')}${ext('cursor')}${ext('face')}${ext('dropper','<b style="--b:#8ab4f8"></b>')}${ext('pip')}${ext('pushb','<b style="--b:#e8503c">1</b>')}${ext('fq')}${ext('bw')}${ext('spray')}${ext('gauge')}${ext('dotsS','<b style="--b:#565656;--f:#fff">1</b>')}${ext('puzzle')}
<div class="sep"></div>${ext('split')}${ext('favs')}${ext('coll')}${ext('heart')}</div>
<div class="row inv"><ui-icon n="people" w="17" ml="14"></ui-icon><fit-text w="29" ml="9">Invite</fit-text></div>
<div class="row up"><ui-icon n="more" w="16" ml="16"></ui-icon><b style="left:27px;top:15px">↑</b></div>`);

define('favorites-bar',`<style>:host{display:flex;height:32px;align-items:center}.sep{width:1px;height:16px;background:#666;margin-left:11px}.grow{flex:1}fit-text{margin-top:-2px}</style>
<ui-icon n="doc" w="16" ml="14"></ui-icon><fit-text w="49" ml="8">SQ Youth</fit-text>
<ui-icon n="doc" w="16" ml="16"></ui-icon><fit-text w="114" ml="8">sqld sda summer ca...</fit-text>
<ui-icon n="signin" w="16" ml="16"></ui-icon><fit-text w="37" ml="8">Sign In</fit-text>
<ui-icon n="ai" w="16" ml="16"></ui-icon><fit-text w="111" ml="8">AI Content Detecto...</fit-text>
<div class="grow"></div>
<ui-icon n="chev" w="18"></ui-icon><div class="sep" style="margin-left:8px"></div><ui-icon n="folder" w="16" ml="9"></ui-icon><fit-text w="80" ml="8" style="margin-right:14px">Other favorites</fit-text>`);

define('load-ring',`<style>:host{display:block;width:60px;height:60px;position:relative}
.r{width:60px;height:60px;border-radius:50%;background:conic-gradient(#000 0 36deg,#00102c 46deg,#00265f 75deg,#003c90 110deg,#0058b8 140deg,#008cee 165deg,#0aa2fb 190deg,#06b8ff 230deg,#16d3fa 265deg,#5ae7f8 290deg,#e8ffff 308deg,#fff 322deg,#000 323deg);-webkit-mask:radial-gradient(circle,transparent 24px,#000 24.700px 29.500px,transparent 30px)}
.t{position:absolute;left:10px;top:4px;width:6px;height:6px;border-radius:50%;background:#fff;box-shadow:0 0 2px 1px #999}</style><div class="r"></div><div class="t"></div>`);

define('seek-bar',`<style>:host{display:flex;height:12px;align-items:center}
.on{width:1587px;height:3px;background:#41a8ff;border-radius:2px 0 0 2px}.k{width:12px;height:12px;border-radius:50%;background:#f2f2f2}.off{width:175px;height:3px;background:#343434;border-radius:0 2px 2px 0}
.t{margin-left:27px;margin-top:-2px;font-weight:700;font-size:12.500px;color:#dedede}</style>
<div class="on"></div><div class="k"></div><div class="off"></div><fit-text class="t" w="31">11:11</fit-text>`);

define('video-player',`<style>
:host{display:flex;flex-direction:column;background:#000;border-radius:8px;height:948px;width:1872px;margin:2px 0 0 4px;box-sizing:border-box}
header{display:flex;align-items:center;height:65px;padding:0 27px 0 33px}
.h{color:#979797;font:700 33.500px/40px Lato,"Open Sans",sans-serif}
.grow{flex:1}.mid{flex:1;display:flex;justify-content:center;padding-top:379px}
.ctl{display:grid;grid-template-columns:1fr auto 1fr;height:34px;align-items:center;padding:0 24.500px 0 0}
.c,.r{display:flex;align-items:center}.r{justify-content:flex-end}
.c{padding-left:26px}
seek-bar{margin:6px 0 80px 20px}
</style>
<header><ui-icon n="vback" w="14" h="26" vb="14 26" style="margin-top:2px"></ui-icon><fit-text class="h" w="167" ml="14">Jojo Rabbit</fit-text><div class="grow"></div><ui-icon n="subs" w="26" h="20" vb="26 20"></ui-icon></header>
<div class="mid"><load-ring></load-ring></div>
<div class="ctl"><span></span><div class="c"><ui-icon n="prev" w="24" h="24" vb="24 24"></ui-icon><ui-icon n="rew" w="30" vb="30 30" ml="24"></ui-icon><ui-icon n="vplay" w="25" h="28" vb="25 28" ml="22"></ui-icon><ui-icon n="fwd" w="30" vb="30 30" ml="19"></ui-icon></div>
<div class="r"><ui-icon n="vol" w="25" h="22" vb="25 22"></ui-icon><ui-icon n="full" w="27" h="19" vb="27 19" ml="20"></ui-icon></div></div>
<seek-bar></seek-bar>`);

const apps=['tag','box','games','m365','outlook','plane'].map(n=>[n,18]).concat(['crest','perpB','bot','burst','rain','root','notion'].map(n=>[n,20]),[['dee',20],['targetG',20],['knotB',20],['rec',20],['desmos',20]]);
define('side-bar',`<style>:host{display:flex;flex-direction:column;align-items:center;width:44px}
.i{height:40px;width:40px;display:flex;align-items:center;justify-content:center;flex:none}.s{width:28px;height:1px;background:#757575;flex:none}.grow{flex:1}</style>
<ui-icon n="copilot" w="24" h="22" vb="24 22" style="margin-top:8px"></ui-icon>
<div class="i" style="margin-top:9px;margin-right:2px"><ui-icon n="search" w="17"></ui-icon></div>
<div style="height:1px"></div>
${apps.map(([n,w])=>`<div class="i"><ui-icon n="${n}" w="${w}"></ui-icon></div>`).join('')}
<div class="s" style="margin-top:12px"></div>
<div class="i" style="margin-top:11px"><ui-icon n="plus" w="16"></ui-icon></div>
<div class="grow"></div>
<div class="s"></div><div class="i" style="margin-top:2px"><ui-icon n="panel" w="16"></ui-icon></div><div class="i" style="margin-bottom:2px"><ui-icon n="gear" w="18"></ui-icon></div>`);

define('task-bar',`<style>:host{display:grid;grid-template-columns:900px 120px 900px;height:24px;box-sizing:border-box;border-top:1px solid #464646;background:#222;align-items:center;font-size:12px}
.h{height:3px;border-radius:2px;background:#9d9d9d}.t{display:flex;align-items:center;justify-content:flex-end;padding-right:8px}</style>
<span></span><div class="h"></div><div class="t"><fit-text w="23" style="margin-top:1px">ENG</fit-text><ui-icon n="wifi" w="16" ml="19"></ui-icon><ui-icon n="snd" w="17" ml="8"></ui-icon><ui-icon n="bat" w="16" ml="7"></ui-icon><fit-text w="43" ml="16" style="margin-top:-1px">6:53 PM</fit-text></div>`);

define('browser-window',`<style>:host{display:flex;flex-direction:column;width:1920px;height:1080px;background:#3b3b3b}
main{display:flex;flex:1;min-height:0}.left{width:1876px}</style>
<tab-strip></tab-strip><main><div class="left"><tool-bar></tool-bar><favorites-bar></favorites-bar><video-player></video-player></div><side-bar></side-bar></main><task-bar></task-bar>`);
</script>
</body>
</html>
